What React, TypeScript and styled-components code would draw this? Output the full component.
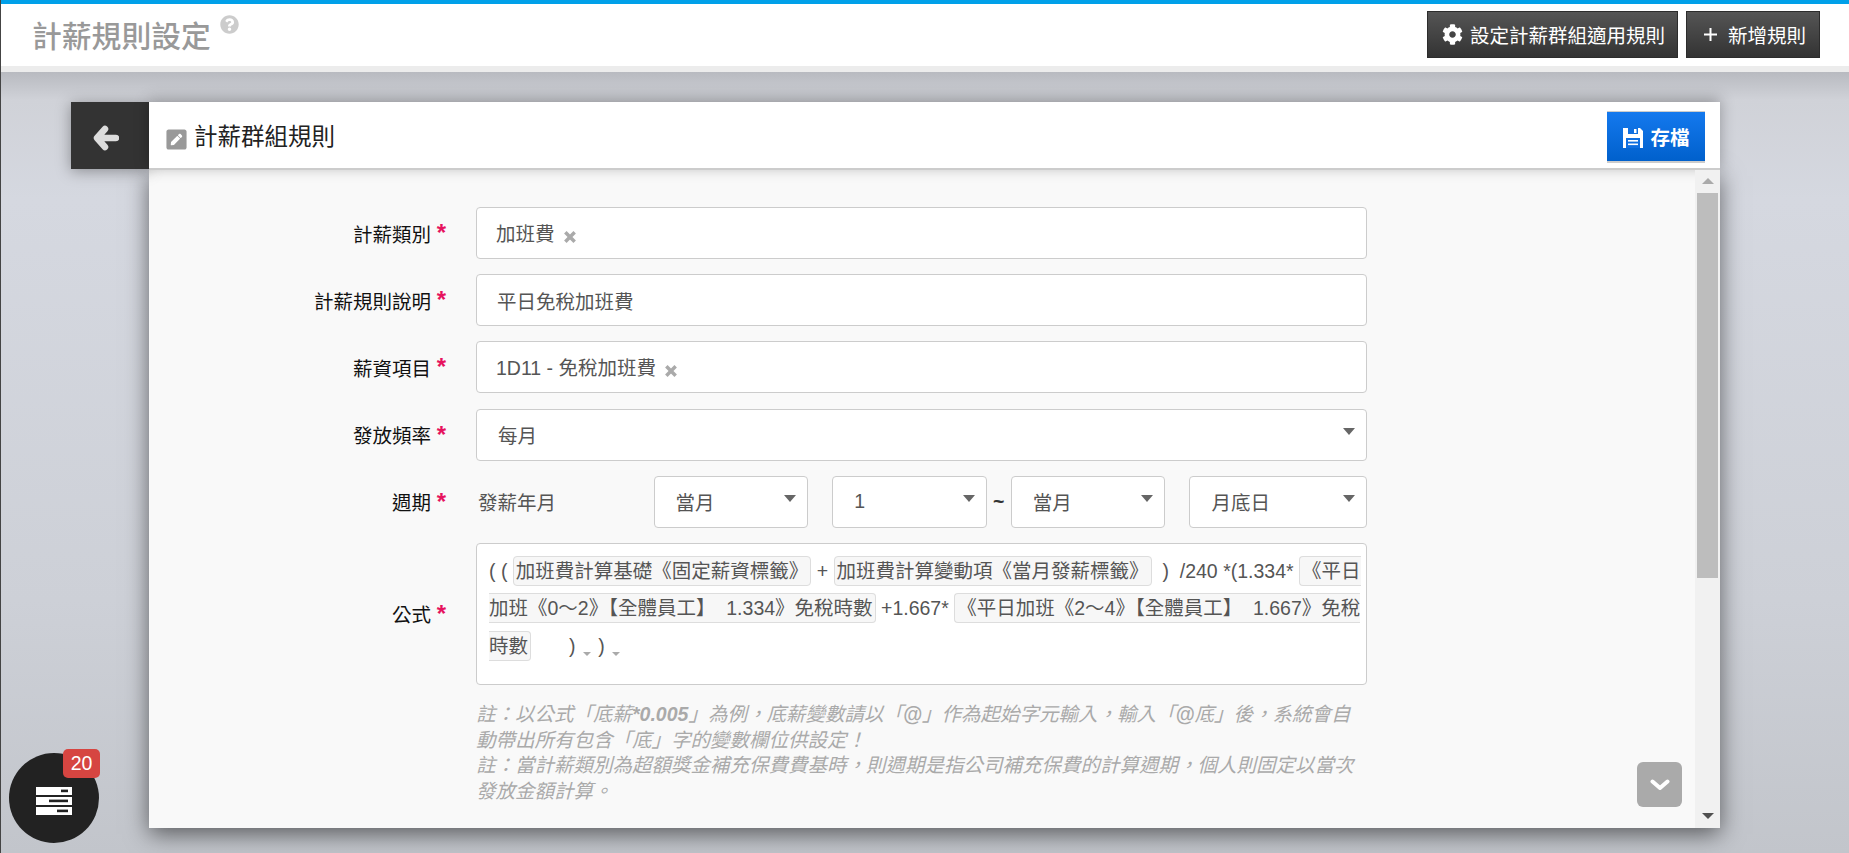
import styled, {createGlobalStyle} from "styled-components";
import {FaCog, FaPenSquare, FaQuestionCircle} from "react-icons/fa";
import {ReactNode} from "react";

const GlobalStyle = createGlobalStyle`
    html, body {
        margin: 0;
        padding: 0;
    }
    body {
        font-family: "Liberation Sans", "Noto Sans CJK TC", sans-serif;
        font-size: 19.5px;
        color: #555;
    }
`

const Tag = ({children}: {children: ReactNode}) => (
    <TagValue>
        {children}
        <TagRemove viewBox="0 0 12 12">
            <path d="M2 2 L10 10 M10 2 L2 10" stroke="#aaa" strokeWidth="3"/>
        </TagRemove>
    </TagValue>
);

const FieldRow = ({label, children}: {label: string; children: ReactNode}) => (
    <Row>
        <Label>{label}<Required>*</Required></Label>
        {children}
    </Row>
);

export default function App() {
    return (
        <Page>
            <GlobalStyle/>
            <TopBar>
                <PageTitle>
                    計薪規則設定
                    <HelpIcon><FaQuestionCircle/></HelpIcon>
                </PageTitle>
                <TopActions>
                    <DarkButton><FaCog size={21}/>設定計薪群組適用規則</DarkButton>
                    <DarkButton $wide>
                        <svg width="13" height="13" viewBox="0 0 13 13">
                            <path d="M6.5 0 V13 M0 6.5 H13" stroke="#fff" strokeWidth="2"/>
                        </svg>
                        新增規則
                    </DarkButton>
                </TopActions>
            </TopBar>

            <Panel>
                <PanelHead>
                    <BackButton>
                        <svg width="26" height="26" viewBox="0 0 26 26">
                            <path d="M12 4 L4 13 L12 22 M5 13 H23" fill="none" stroke="#ddd" strokeWidth="6.5" strokeLinejoin="round" strokeLinecap="round"/>
                        </svg>
                    </BackButton>
                    <HeadBar>
                        <HeadTitle>
                            <FaPenSquare size={23} color="#999"/>
                            計薪群組規則
                        </HeadTitle>
                        <SaveButton>
                            <svg width="22" height="22" viewBox="0 0 22 22">
                                <path d="M1 1 H18 L21 4 V21 H1 Z" fill="#fff"/>
                                <rect x="6" y="1" width="10" height="6" fill="#0f6fe0"/>
                                <rect x="12" y="2" width="2.5" height="4" fill="#fff"/>
                                <rect x="4" y="11" width="14" height="10" fill="#0f6fe0"/>
                                <rect x="6" y="13" width="10" height="1.6" fill="#fff"/>
                                <rect x="6" y="16.5" width="10" height="1.6" fill="#fff"/>
                            </svg>
                            存檔
                        </SaveButton>
                    </HeadBar>
                </PanelHead>

                <PanelBody>
                    <Form>
                        <FieldRow label="計薪類別">
                            <Field><Tag>加班費</Tag></Field>
                        </FieldRow>
                        <FieldRow label="計薪規則說明">
                            <Field $indent>平日免稅加班費</Field>
                        </FieldRow>
                        <FieldRow label="薪資項目">
                            <Field><Tag>1D11 - 免稅加班費</Tag></Field>
                        </FieldRow>
                        <FieldRow label="發放頻率">
                            <Select>每月</Select>
                        </FieldRow>
                        <FieldRow label="週期">
                            <PeriodRow>
                                <PeriodText>發薪年月</PeriodText>
                                <Select $width={155}>當月</Select>
                                <PeriodGap/>
                                <Select $width={155}>1</Select>
                                <PeriodGap>~</PeriodGap>
                                <Select $width={155}>當月</Select>
                                <PeriodGap/>
                                <Select $width={178}>月底日</Select>
                            </PeriodRow>
                        </FieldRow>
                        <FieldRow label="公式">
                            <Formula>
                                ( ( <Chip>加班費計算基礎《固定薪資標籤》</Chip> + <Chip>加班費計算變動項《當月發薪標籤》</Chip>
                                {" "}&nbsp;) &nbsp;/240 *(1.334* <Chip>《平日加班《0～2》【全體員工】&nbsp; 1.334》免稅時數</Chip>
                                {" "}+1.667* <Chip>《平日加班《2～4》【全體員工】&nbsp; 1.667》免稅時數</Chip>
                                <FormulaGap/>) <Caret/> ) <Caret/>
                            </Formula>
                        </FieldRow>
                        <Notes>
                            註：以公式「底薪<b>*0.005</b>」為例，底薪變數請以「<b>@</b>」作為起始字元輸入，輸入「<b>@</b>底」後，系統會自動帶出所有包含「底」字的變數欄位供設定！
                            <br/>
                            註：當計薪類別為超額獎金補充保費費基時，則週期是指公司補充保費的計算週期，個人則固定以當次發放金額計算。
                        </Notes>
                        <ScrollDownButton>
                            <svg width="20" height="12" viewBox="0 0 20 12">
                                <path d="M2.5 2.5 L10 9 L17.5 2.5" fill="none" stroke="#fff" strokeWidth="4" strokeLinecap="round" strokeLinejoin="round"/>
                            </svg>
                        </ScrollDownButton>
                    </Form>
                    <ScrollTrack>
                        <ArrowUp/>
                        <ScrollThumb/>
                        <ArrowDown/>
                    </ScrollTrack>
                </PanelBody>
            </Panel>

            <QueueButton>
                <svg width="36" height="28" viewBox="0 0 36 28">
                    <rect x="0" y="0" width="36" height="8" fill="#fff"/>
                    <rect x="25" y="2.6" width="7" height="2.6" fill="#222"/>
                    <rect x="0" y="10" width="36" height="8" fill="#fff"/>
                    <rect x="13" y="12.6" width="19" height="2.6" fill="#222"/>
                    <rect x="0" y="20" width="36" height="8" fill="#fff"/>
                    <rect x="21" y="22.6" width="11" height="2.6" fill="#222"/>
                </svg>
                <QueueBadge>20</QueueBadge>
            </QueueButton>
        </Page>
    );
}

const Page = styled.div`
    position: relative;
    height: 853px;
    overflow: hidden;
    box-sizing: border-box;
    border-left: 1px solid #444;
    background: linear-gradient(180deg, #b8bac0 72px, #d0d2d8 100px, #d5d8e0 200px, #cdd0d7 600px, #c2c5cb 853px);
`
const TopBar = styled.header`
    height: 62px;
    border-top: 4px solid #00a0e9;
    border-bottom: 6px solid #ececec;
    background: #fff;
    display: flex;
    justify-content: space-between;
    padding: 0 29px 0 31px;
`
const PageTitle = styled.h1`
    margin: 0;
    padding-top: 13px;
    font-size: 29.8px;
    line-height: 40px;
    font-weight: 500;
    color: #999;
    display: flex;
    align-items: flex-start;
`
const HelpIcon = styled.span`
    font-size: 19px;
    color: #ccc;
    margin: -9px 0 0 9px;
`
const TopActions = styled.div`
    display: flex;
    gap: 8px;
    padding-top: 7px;
`
const DarkButton = styled.button<{$wide?: boolean}>`
    height: 47px;
    box-sizing: border-box;
    padding: 0 ${p => p.$wide ? "13px 0 17px" : "12px 0 14px"};
    border: 1px solid #2c2c2c;
    background: linear-gradient(180deg, #555, #333);
    color: #fff;
    font: inherit;
    display: flex;
    align-items: center;
    gap: ${p => p.$wide ? "11px" : "7px"};
`
const Panel = styled.section`
    margin: 30px 0 0 70px;
    width: 1649px;
`
const PanelHead = styled.div`
    display: flex;
    height: 68px;
`
const BackButton = styled.div`
    width: 78px;
    height: 67px;
    background: #333;
    display: flex;
    align-items: center;
    justify-content: center;
    box-shadow: 0 2px 14px rgba(0, 0, 0, .35);
    svg {
        margin: 4px 8px 0 0;
    }
`
const HeadBar = styled.div`
    flex: 1;
    background: #fff;
    border-bottom: 2px solid #ccc;
    display: flex;
    justify-content: space-between;
    padding: 9px 15px 0 16px;
    box-shadow: 0 -3px 14px rgba(0, 0, 0, .3);
`
const HeadTitle = styled.div`
    display: flex;
    align-items: center;
    gap: 6px;
    color: #222;
    font-size: 23.5px;
    height: 48px;
    svg {
        margin-top: 8px;
    }
`
const SaveButton = styled.button`
    width: 98px;
    height: 52px;
    box-sizing: border-box;
    border: 0;
    border-top: 1px solid #ccc;
    border-bottom: 2px solid #ccc;
    background: linear-gradient(180deg, #1479ee, #0060cc);
    color: #fff;
    font: inherit;
    font-weight: 700;
    display: flex;
    align-items: center;
    justify-content: center;
    gap: 6px;
    svg {
        margin-top: 3px;
    }
`
const PanelBody = styled.div`
    margin-left: 78px;
    height: 658px;
    background: #f9f9f9;
    display: flex;
    box-shadow: 0 6px 22px rgba(0, 0, 0, .55);
`
const Form = styled.form`
    position: relative;
    flex: 1;
    padding-top: 37px;
    overflow: hidden;
`
const Row = styled.div`
    display: grid;
    grid-template-columns: 297px 891px;
    column-gap: 30px;
    align-items: center;
    margin-bottom: 15.2px;
`
const Label = styled.label`
    text-align: right;
    color: #111;
    display: flex;
    justify-content: flex-end;
    align-items: center;
    gap: 4px;
`
const Required = styled.span`
    color: #e6135e;
    font-size: 24px;
    line-height: 20px;
    font-weight: 700;
    width: 11px;
`
const Field = styled.div<{$indent?: boolean}>`
    height: 52px;
    box-sizing: border-box;
    border: 1px solid #ccc;
    border-radius: 4px;
    background: #fff;
    padding-left: ${p => p.$indent ? "20px" : "19px"};
    display: flex;
    align-items: center;
`
const TagValue = styled.span`
    display: flex;
    align-items: center;
    gap: 8px;
    margin-bottom: 1px;
`
const TagRemove = styled.svg`
    width: 14px;
    height: 14px;
    margin-top: 9px;
`
const Select = styled.div<{$width?: number}>`
    position: relative;
    height: 52px;
    width: ${p => p.$width ? `${p.$width}px` : "auto"};
    box-sizing: border-box;
    border: 1px solid #ccc;
    border-radius: 4px;
    background: #fff;
    padding-left: 21px;
    display: flex;
    align-items: center;

    &::after {
        content: "";
        position: absolute;
        right: 11px;
        top: 18px;
        border-left: 6px solid transparent;
        border-right: 6px solid transparent;
        border-top: 7px solid #666;
    }
`
const PeriodRow = styled.div`
    display: flex;
    align-items: center;
`
const PeriodText = styled.span`
    width: 178px;
    padding-left: 2px;
    box-sizing: border-box;
`
const PeriodGap = styled.span`
    width: 24px;
    text-align: center;
    color: #333;
    font-weight: 700;
`
const Formula = styled.div`
    height: 142px;
    box-sizing: border-box;
    border: 1px solid #ccc;
    border-radius: 4px;
    background: #fff;
    padding: 9px 0 0 12px;
    line-height: 37.5px;
    overflow: hidden;
`
const Chip = styled.span`
    border: 1px solid #ddd;
    border-radius: 4px;
    background: #f7f7f7;
    padding: 3px 2px;
`
const FormulaGap = styled.span`
    display: inline-block;
    width: 38px;
`
const Caret = styled.i`
    display: inline-block;
    vertical-align: -3px;
    margin: 0 2px;
    border-left: 4px solid transparent;
    border-right: 4px solid transparent;
    border-top: 4px solid #aaa;
`
const Notes = styled.p`
    margin: 17px 0 0 327px;
    width: 891px;
    color: #aaa;
    font-style: italic;
    line-height: 25.7px;
    b {
        font-weight: 700;
    }
`
const ScrollDownButton = styled.div`
    position: absolute;
    right: 13px;
    bottom: 21px;
    width: 45px;
    height: 45px;
    border-radius: 6px;
    background: #aaa;
    display: flex;
    align-items: center;
    justify-content: center;
`
const ScrollTrack = styled.div`
    width: 25px;
    background: #f1f1f1;
    display: flex;
    flex-direction: column;
    align-items: center;
`
const ScrollThumb = styled.div`
    width: 21px;
    height: 385px;
    margin-top: 9px;
    background: #bdbdbd;
`
const ArrowUp = styled.div`
    margin-top: 8px;
    border-left: 6px solid transparent;
    border-right: 6px solid transparent;
    border-bottom: 6px solid #aaa;
`
const ArrowDown = styled.div`
    margin-top: auto;
    margin-bottom: 9px;
    border-left: 6px solid transparent;
    border-right: 6px solid transparent;
    border-top: 6px solid #505050;
`
const QueueButton = styled.div`
    position: absolute;
    left: 8px;
    top: 753px;
    width: 90px;
    height: 90px;
    border-radius: 50%;
    background: #222;
    display: flex;
    align-items: center;
    justify-content: center;
    svg {
        margin-top: 6px;
    }
`
const QueueBadge = styled.span`
    position: absolute;
    right: -1px;
    top: -4px;
    width: 37px;
    height: 29px;
    border-radius: 5px;
    background: #d64541;
    color: #fff;
    display: flex;
    align-items: center;
    justify-content: center;
`
